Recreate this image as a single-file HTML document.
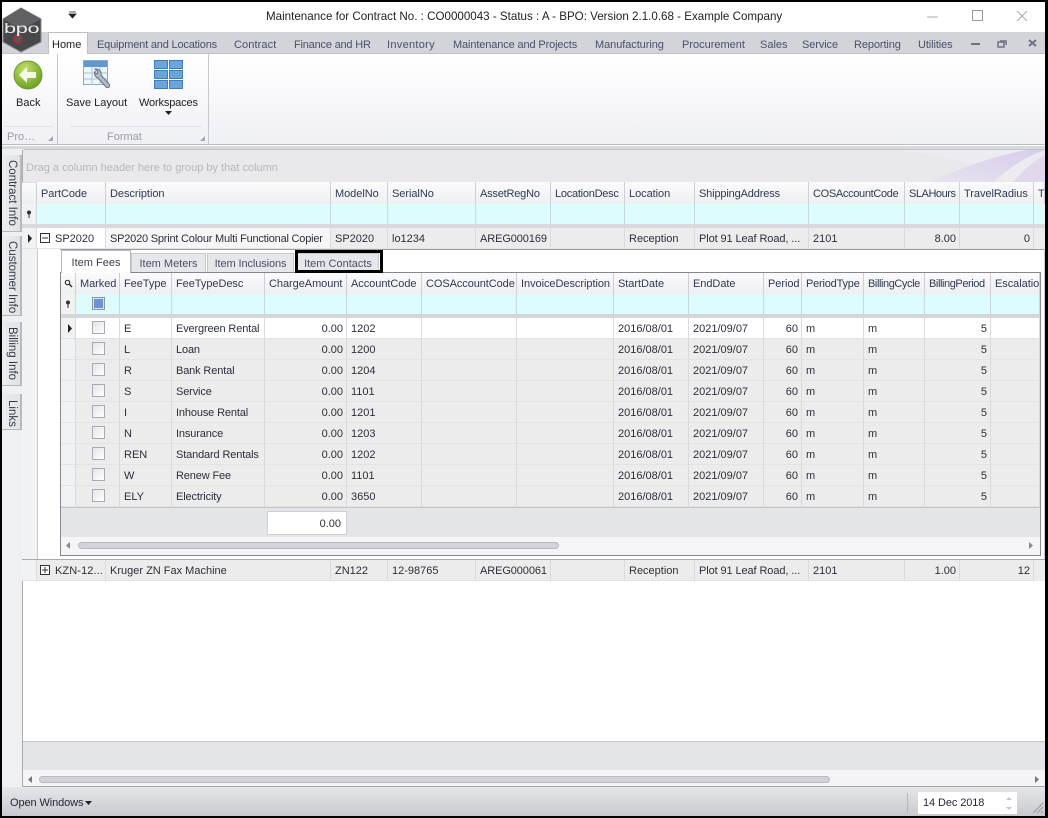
<!DOCTYPE html>
<html><head><meta charset="utf-8"><style>
html,body{margin:0;padding:0;width:1048px;height:818px;overflow:hidden;background:#fff}
*{box-sizing:border-box}
body{font:11px "Liberation Sans",sans-serif;color:#2a2f3c;position:relative}
.a{position:absolute}
.t{position:absolute;white-space:nowrap}
.tab{position:absolute;top:39px;color:#4a5068;white-space:nowrap;line-height:13px}
.hr,.fr,.r{position:absolute;display:grid}
.hr>div,.fr>div,.r>div{border-right:1px solid #d9dade;padding:0 3px 0 4px;white-space:nowrap;overflow:hidden}
.hr>div{color:#2f3a52;line-height:22px;background:linear-gradient(#fbfbfc,#eeeff2);border-right:1px solid #cdcfd5;letter-spacing:-.05px}
.hr.main>div{line-height:25px}
.fr>div{background:#ddfdfd;border-right:1px solid #cbd8de}
.r>div{line-height:22px;border-bottom:1px solid #e2e3e6}
.main{left:22px;width:1023px;grid-template-columns:15px 69px 225px 57px 88px 75px 74px 70px 114px 96px 55px 74px 1fr}
.det{left:61px;width:979px;grid-template-columns:15px 44px 52px 93px 82px 75px 95px 97px 75px 75px 38px 62px 61px 66px 49px}
.main.r>div:nth-child(3){letter-spacing:-.21px}
.det.r>div:nth-child(4){letter-spacing:-.14px}
.r>div.n{text-align:right;padding:0 3px 0 0}
.odd>div{background:#ececec}
.even>div{background:#fff}
.r>div.ind{background:#f1f2f4}
.cb{display:block;width:13px;height:13px;margin:3px 0 0 12px;border:1px solid #a9abb3;background:linear-gradient(135deg,#e4e4e9,#fff)}
.side{position:absolute;left:2px;width:20px;background:linear-gradient(90deg,#ecedee,#e1e2e4);border-right:2px solid #b9babe;border-bottom:1px solid #b5b6ba;writing-mode:vertical-rl;line-height:16px;padding-top:5px;color:#33394a;font-size:11.500px;white-space:nowrap}
.dt{position:absolute;top:253px;height:19px;background:#e6e7ea;border:1px solid #c6c8cf;border-bottom:0;line-height:20px;text-align:center;color:#4a5068}
</style></head><body>

<!-- title bar -->
<div class="t" style="left:266px;top:10px;font-size:11.600px;line-height:14px;color:#222">Maintenance for Contract No. : CO0000043 - Status : A - BPO: Version 2.1.0.68 - Example Company</div>
<svg class="a" style="left:68px;top:11px" width="10" height="9"><path d="M1 1h7M1 3h7L4.500 7z" fill="#222" stroke="#222" stroke-width=".8"/></svg>
<svg class="a" style="left:920px;top:8px" width="116" height="16"><path d="M7 9h11" stroke="#aaa"/><rect x="52.500" y="2.500" width="10" height="10" fill="none" stroke="#999"/><path d="M97 3l10 10M107 3L97 13" stroke="#aaa"/></svg>

<!-- ribbon tabs -->
<div class="a" style="left:2px;top:32px;width:1044px;height:22px;background:#d2d4da;border-bottom:1px solid #bfc1c8"></div>
<div class="a" style="left:48px;top:32px;width:40px;height:22px;background:linear-gradient(#fbfbfc,#fff);border:1px solid #bdbfc6;border-bottom:0"></div>
<div class="tab" style="left:52px;color:#222">Home</div>
<div class="tab" style="left:97px;letter-spacing:-.18px">Equipment and Locations</div>
<div class="tab" style="left:234px;letter-spacing:.1px">Contract</div>
<div class="tab" style="left:294px;letter-spacing:-.2px">Finance and HR</div>
<div class="tab" style="left:387px;letter-spacing:.3px">Inventory</div>
<div class="tab" style="left:453px;letter-spacing:-.13px">Maintenance and Projects</div>
<div class="tab" style="left:595px;letter-spacing:-.07px">Manufacturing</div>
<div class="tab" style="left:682px">Procurement</div>
<div class="tab" style="left:760px">Sales</div>
<div class="tab" style="left:802px;letter-spacing:-.1px">Service</div>
<div class="tab" style="left:854px;letter-spacing:-.1px">Reporting</div>
<div class="tab" style="left:918px;letter-spacing:-.1px">Utilities</div>
<svg class="a" style="left:968px;top:36px" width="72" height="14"><path d="M3 8h9" stroke="#6d7283" stroke-width="2"/><path d="M32 5h6v4M30 6h6v5h-6z" fill="none" stroke="#6d7283" stroke-width="1.500"/><path d="M61 4l7 6M68 4l-7 6" stroke="#6d7283" stroke-width="2"/></svg>

<!-- ribbon body -->
<div class="a" style="left:2px;top:54px;width:1044px;height:91px;background:linear-gradient(#fff,#eff0f4);border-bottom:1px solid #b9bbc2"></div>
<div class="a" style="left:57px;top:54px;width:1px;height:91px;background:#c6c8ce"></div>
<div class="a" style="left:208px;top:54px;width:1px;height:91px;background:#c6c8ce"></div>
<div class="a" style="left:5px;top:126px;width:48px;height:1px;background:#e0e1e6"></div>
<div class="a" style="left:70px;top:126px;width:132px;height:1px;background:#e0e1e6"></div>
<svg class="a" style="left:13px;top:60px" width="30" height="30"><defs><radialGradient id="g" cx=".4" cy=".3" r=".8"><stop offset="0" stop-color="#c4e06a"/><stop offset="1" stop-color="#5e9a1a"/></radialGradient></defs><circle cx="15" cy="15" r="14" fill="url(#g)" stroke="#6f9a30"/><path d="M6 15l8-8v5h9v6h-9v5z" fill="#f4f8e4"/></svg>
<div class="t" style="left:16px;top:97px;line-height:13px;color:#222">Back</div>
<div class="t" style="left:7px;top:131px;line-height:13px;color:#9a9ca5">Pro…</div>
<svg class="a" style="left:83px;top:60px" width="30" height="30"><rect x=".5" y=".5" width="24" height="24" fill="#eef4fa" stroke="#8aa9c9"/><rect x="1" y="1" width="23" height="6" fill="#5f97cf"/><path d="M1 13h23M1 19h23M9 7v18M17 7v18" stroke="#a9c2da"/><path d="M12 11a5 5 0 0 0 3 7l8 9c2 2 5-1 3-3l-8-9a5 5 0 0 0-6-6l3 3-1 2-2-1z" fill="#b4bbc6" stroke="#69707e"/></svg>
<div class="t" style="left:66px;top:97px;line-height:13px;color:#222">Save Layout</div>
<svg class="a" style="left:154px;top:60px" width="30" height="30"><g fill="#6ba5dc" stroke="#3f7cb8"><rect x=".5" y=".5" width="13" height="8"/><rect x="15.500" y=".5" width="13" height="8"/><rect x=".5" y="10.500" width="13" height="8"/><rect x="15.500" y="10.500" width="13" height="8"/><rect x=".5" y="20.500" width="13" height="8"/><rect x="15.500" y="20.500" width="13" height="8"/></g></svg>
<div class="t" style="left:139px;top:97px;line-height:13px;letter-spacing:-.15px;color:#222">Workspaces</div>
<svg class="a" style="left:165px;top:111px" width="8" height="5"><path d="M0 0h7L3.500 4z" fill="#222"/></svg>
<div class="t" style="left:107px;top:131px;line-height:13px;color:#9a9ca5">Format</div>
<svg class="a" style="left:47px;top:135px" width="7" height="7"><path d="M6 1v5H1z" fill="#a5a7af"/></svg>
<svg class="a" style="left:199px;top:135px" width="7" height="7"><path d="M6 1v5H1z" fill="#a5a7af"/></svg>

<!-- logo -->
<svg class="a" style="left:0;top:5px" width="46" height="49"><path d="M21 3L41 14V37L21 47L3 37V14Z" fill="#48484b" stroke="#8a8b8e"/><path d="M21 3L41 14L21 25L3 14Z" fill="#606164"/><circle cx="18" cy="34" r="4" fill="#55565a" stroke="#d21e26" stroke-width="1.300"/></svg>
<div class="t" style="left:4px;top:21px;font-size:14px;line-height:14px;color:#eee;transform:scaleX(1.55);transform-origin:0 0;letter-spacing:-.2px">bpo</div>

<!-- side strip -->
<div class="a" style="left:2px;top:146px;width:1044px;height:3px;background:#d8d9dd"></div>
<div class="a" style="left:2px;top:149px;width:20px;height:639px;background:#eff0f1"></div>
<div class="side" style="top:155px;height:77px">Contract Info</div>
<div class="side" style="top:236px;height:80px">Customer Info</div>
<div class="side" style="top:322px;height:64px">Billing Info</div>
<div class="side" style="top:394px;height:36px;padding-top:6px">Links</div>

<!-- group panel -->
<div class="a" style="left:22px;top:149px;width:1023px;height:33px;background:#e9e9ec;overflow:hidden;border-top:1px solid #c4c5ca;border-top-left-radius:3px">
<svg class="a" style="left:0;top:0" width="1023" height="33"><defs><linearGradient id="p" x1="0" y1="1" x2="1" y2="0"><stop offset="0" stop-color="#e8e3f1"/><stop offset="1" stop-color="#d8cdea"/></linearGradient></defs><path d="M880 0C925 6 960 14 985 33H1023V0Z" fill="#eeeaf2"/><path d="M905 33C935 20 970 6 1005 0H1023C1000 8 985 20 970 33Z" fill="url(#p)"/><path d="M990 33C1000 22 1010 12 1023 5V33Z" fill="#e2d8ee"/></svg>
<div class="t" style="left:4px;top:12px;line-height:13px;color:#b5b7bd">Drag a column header here to group by that column</div>
</div>
<div class="a" style="left:22px;top:150px;width:1px;height:637px;background:#a8aab0"></div>

<!-- main grid -->
<div class="hr main" style="top:182px;height:22px"><div style="border-top:1px solid #ddd"></div><div>PartCode</div><div>Description</div><div>ModelNo</div><div>SerialNo</div><div style="letter-spacing:-.2px">AssetRegNo</div><div style="letter-spacing:-.25px">LocationDesc</div><div>Location</div><div style="letter-spacing:-.15px">ShippingAddress</div><div style="letter-spacing:-.32px">COSAccountCode</div><div style="letter-spacing:-.45px">SLAHours</div><div>TravelRadius</div><div>T</div></div>
<div class="fr main" style="top:204px;height:20px"><div style="background:#f1f2f4"></div><div></div><div></div><div></div><div></div><div></div><div></div><div></div><div></div><div></div><div></div><div></div><div style="border:0"></div></div>
<svg class="a" style="left:26px;top:210px" width="7" height="9"><circle cx="3" cy="2.500" r="2" fill="#333"/><path d="M3 4v4" stroke="#333"/></svg>
<div class="a" style="left:22px;top:224px;width:1023px;height:4px;background:#d9dadf"></div>

<div class="r main odd" style="top:228px;height:21px"><div class="ind"></div><div style="padding-left:18px;background:#fff">SP2020</div><div style="background:#f6f6f7">SP2020 Sprint Colour Multi Functional Copier</div><div>SP2020</div><div>lo1234</div><div style="letter-spacing:-.1px">AREG000169</div><div></div><div>Reception</div><div style="letter-spacing:-.1px">Plot 91 Leaf Road, ...</div><div>2101</div><div class="n">8.00</div><div class="n">0</div><div style="border:0"></div></div>
<svg class="a" style="left:27px;top:234px" width="6" height="9"><path d="M1 0l4 4.500L1 9z" fill="#222"/></svg>
<svg class="a" style="left:40px;top:233px" width="10" height="10"><rect x=".5" y=".5" width="9" height="9" fill="#fff" stroke="#333"/><path d="M2 5h6" stroke="#333"/></svg>

<!-- detail area -->
<div class="a" style="left:22px;top:249px;width:15px;height:310px;background:#f1f2f4"></div>
<div class="a" style="left:37px;top:249px;width:23px;height:310px;background:#fff;border-left:1px solid #c9cbd2"></div>
<div class="a" style="left:60px;top:249px;width:984px;height:1px;background:#9b9da3"></div>
<div class="a" style="left:1044px;top:249px;width:1px;height:310px;background:#c9cbd2"></div>

<div class="a" style="left:61px;top:250px;width:70px;height:23px;background:#fff;border:1px solid #b8bac2;border-bottom:0;line-height:24px;text-align:center;color:#3a4050;z-index:3">Item Fees</div>
<div class="dt" style="left:131px;width:75px">Item Meters</div>
<div class="dt" style="left:207px;width:87px;letter-spacing:-.1px">Item Inclusions</div>
<div class="dt" style="left:297px;width:82px">Item Contacts</div>
<div class="a" style="left:295px;top:250px;width:88px;height:23px;border:3px solid #000;z-index:4"></div>

<div class="a" style="left:60px;top:272px;width:981px;height:284px;border:1px solid #85878d;background:#fff"></div>
<div class="hr det" style="top:273px;height:21px"><div></div><div>Marked</div><div>FeeType</div><div>FeeTypeDesc</div><div>ChargeAmount</div><div>AccountCode</div><div style="letter-spacing:-.08px">COSAccountCode</div><div>InvoiceDescription</div><div>StartDate</div><div>EndDate</div><div>Period</div><div style="letter-spacing:-.2px">PeriodType</div><div style="letter-spacing:-.42px">BillingCycle</div><div style="letter-spacing:-.42px">BillingPeriod</div><div>Escalation</div></div>
<svg class="a" style="left:64px;top:279px" width="9" height="9"><circle cx="3.500" cy="3.500" r="2.200" fill="none" stroke="#333" stroke-width="1.200"/><path d="M5 5l3 3" stroke="#333" stroke-width="1.500"/></svg>
<div class="fr det" style="top:294px;height:20px"><div style="background:#f1f2f4"></div><div></div><div></div><div></div><div></div><div></div><div></div><div></div><div></div><div></div><div></div><div></div><div></div><div></div><div></div></div>
<svg class="a" style="left:65px;top:300px" width="7" height="9"><circle cx="3" cy="2.500" r="2" fill="#333"/><path d="M3 4v4" stroke="#333"/></svg>
<div class="a" style="left:92px;top:297px;width:13px;height:13px;border:1px solid #8f93a2;background:#dfe1e8"><div style="margin:1px;width:9px;height:9px;background:#6a93cf"></div></div>
<div class="a" style="left:61px;top:314px;width:979px;height:4px;background:#d5d6da"></div>

<div class="r det even" style="top:318px;height:21px"><div class="ind"></div><div><i class="cb"></i></div><div>E</div><div>Evergreen Rental</div><div class="n">0.00</div><div>1202</div><div></div><div></div><div>2016/08/01</div><div>2021/09/07</div><div class="n">60</div><div>m</div><div>m</div><div class="n">5</div><div></div></div>
<div class="r det odd" style="top:339px;height:21px"><div class="ind"></div><div><i class="cb"></i></div><div>L</div><div>Loan</div><div class="n">0.00</div><div>1200</div><div></div><div></div><div>2016/08/01</div><div>2021/09/07</div><div class="n">60</div><div>m</div><div>m</div><div class="n">5</div><div></div></div>
<div class="r det odd" style="top:360px;height:21px"><div class="ind"></div><div><i class="cb"></i></div><div>R</div><div>Bank Rental</div><div class="n">0.00</div><div>1204</div><div></div><div></div><div>2016/08/01</div><div>2021/09/07</div><div class="n">60</div><div>m</div><div>m</div><div class="n">5</div><div></div></div>
<div class="r det odd" style="top:381px;height:21px"><div class="ind"></div><div><i class="cb"></i></div><div>S</div><div>Service</div><div class="n">0.00</div><div>1101</div><div></div><div></div><div>2016/08/01</div><div>2021/09/07</div><div class="n">60</div><div>m</div><div>m</div><div class="n">5</div><div></div></div>
<div class="r det odd" style="top:402px;height:21px"><div class="ind"></div><div><i class="cb"></i></div><div>I</div><div>Inhouse Rental</div><div class="n">0.00</div><div>1201</div><div></div><div></div><div>2016/08/01</div><div>2021/09/07</div><div class="n">60</div><div>m</div><div>m</div><div class="n">5</div><div></div></div>
<div class="r det odd" style="top:423px;height:21px"><div class="ind"></div><div><i class="cb"></i></div><div>N</div><div>Insurance</div><div class="n">0.00</div><div>1203</div><div></div><div></div><div>2016/08/01</div><div>2021/09/07</div><div class="n">60</div><div>m</div><div>m</div><div class="n">5</div><div></div></div>
<div class="r det odd" style="top:444px;height:21px"><div class="ind"></div><div><i class="cb"></i></div><div>REN</div><div>Standard Rentals</div><div class="n">0.00</div><div>1202</div><div></div><div></div><div>2016/08/01</div><div>2021/09/07</div><div class="n">60</div><div>m</div><div>m</div><div class="n">5</div><div></div></div>
<div class="r det odd" style="top:465px;height:21px"><div class="ind"></div><div><i class="cb"></i></div><div>W</div><div>Renew Fee</div><div class="n">0.00</div><div>1101</div><div></div><div></div><div>2016/08/01</div><div>2021/09/07</div><div class="n">60</div><div>m</div><div>m</div><div class="n">5</div><div></div></div>
<div class="r det odd" style="top:486px;height:21px"><div class="ind"></div><div><i class="cb"></i></div><div>ELY</div><div>Electricity</div><div class="n">0.00</div><div>3650</div><div></div><div></div><div>2016/08/01</div><div>2021/09/07</div><div class="n">60</div><div>m</div><div>m</div><div class="n">5</div><div></div></div>
<svg class="a" style="left:67px;top:324px" width="6" height="9"><path d="M1 0l4 4.500L1 9z" fill="#222"/></svg>

<div class="a" style="left:61px;top:507px;width:979px;height:30px;background:#e4e5e8;border-top:1px solid #c4c5ca"></div>
<div class="a" style="left:267px;top:511px;width:80px;height:24px;background:#fff;border:1px solid #cfd0d5;text-align:right;padding-right:5px;line-height:24px">0.00</div>
<div class="a" style="left:61px;top:537px;width:979px;height:18px;background:#f5f5f7"></div>
<div class="a" style="left:78px;top:542px;width:481px;height:7px;border-radius:4px;background:#d2d3d8;border:1px solid #b9bac0"></div>
<svg class="a" style="left:66px;top:542px" width="5" height="7"><path d="M4 0v7L0 3.500z" fill="#888"/></svg>
<svg class="a" style="left:1029px;top:542px" width="5" height="7"><path d="M0 0v7l4-3.500z" fill="#888"/></svg>

<!-- second row -->
<div class="r main odd" style="top:559px;height:22px;border-top:1px solid #a8aab0"><div class="ind"></div><div style="padding-left:18px;letter-spacing:.1px">KZN-12...</div><div style="letter-spacing:0">Kruger ZN Fax Machine</div><div>ZN122</div><div>12-98765</div><div style="letter-spacing:-.1px">AREG000061</div><div></div><div>Reception</div><div style="letter-spacing:-.1px">Plot 91 Leaf Road, ...</div><div>2101</div><div class="n">1.00</div><div class="n">12</div><div style="border:0"></div></div>
<svg class="a" style="left:40px;top:565px" width="10" height="10"><rect x=".5" y=".5" width="9" height="9" fill="#fff" stroke="#333"/><path d="M2 5h6M5 2v6" stroke="#333"/></svg>

<!-- bottom -->
<div class="a" style="left:23px;top:741px;width:1022px;height:29px;background:#e4e5e9;border-top:1px solid #c5c6cc"></div>
<div class="a" style="left:23px;top:770px;width:1022px;height:17px;background:#f4f4f6;border-bottom:1px solid #a8aab0"></div>
<div class="a" style="left:39px;top:776px;width:791px;height:7px;border-radius:4px;background:#d2d3d8;border:1px solid #b9bac0"></div>
<svg class="a" style="left:28px;top:776px" width="5" height="7"><path d="M4 0v7L0 3.500z" fill="#777"/></svg>
<svg class="a" style="left:1035px;top:776px" width="5" height="7"><path d="M0 0v7l4-3.500z" fill="#777"/></svg>
<div class="a" style="left:2px;top:787px;width:1044px;height:29px;background:linear-gradient(#e6e7ea,#c8c9ce)"></div>
<div class="t" style="left:10px;top:797px;font-size:11px;line-height:13px;letter-spacing:-.1px;color:#1f2538">Open Windows</div>
<svg class="a" style="left:85px;top:801px" width="8" height="5"><path d="M0 0h7L3.500 4z" fill="#222"/></svg>
<div class="a" style="left:907px;top:793px;width:1px;height:20px;background:#b5b6bb"></div>
<div class="a" style="left:918px;top:792px;width:99px;height:22px;background:#fff;line-height:22px;padding-left:5px;letter-spacing:-.1px;color:#1f2538">14 Dec 2018</div>
<svg class="a" style="left:1005px;top:796px" width="9" height="16"><path d="M1 4l3-3 3 3zM1 11l3 3 3-3z" fill="#c4c5ca"/></svg>
<svg class="a" style="left:1032px;top:801px" width="12" height="13"><path d="M1 12L11 2M5 12l6-6M9 12l2-2" stroke="#9b9ca1"/></svg>

<!-- outer frame -->
<div class="a" style="left:0;top:0;width:1048px;height:818px;border:2px solid #000;border-right-width:3px;z-index:9;pointer-events:none"></div>
</body></html>
